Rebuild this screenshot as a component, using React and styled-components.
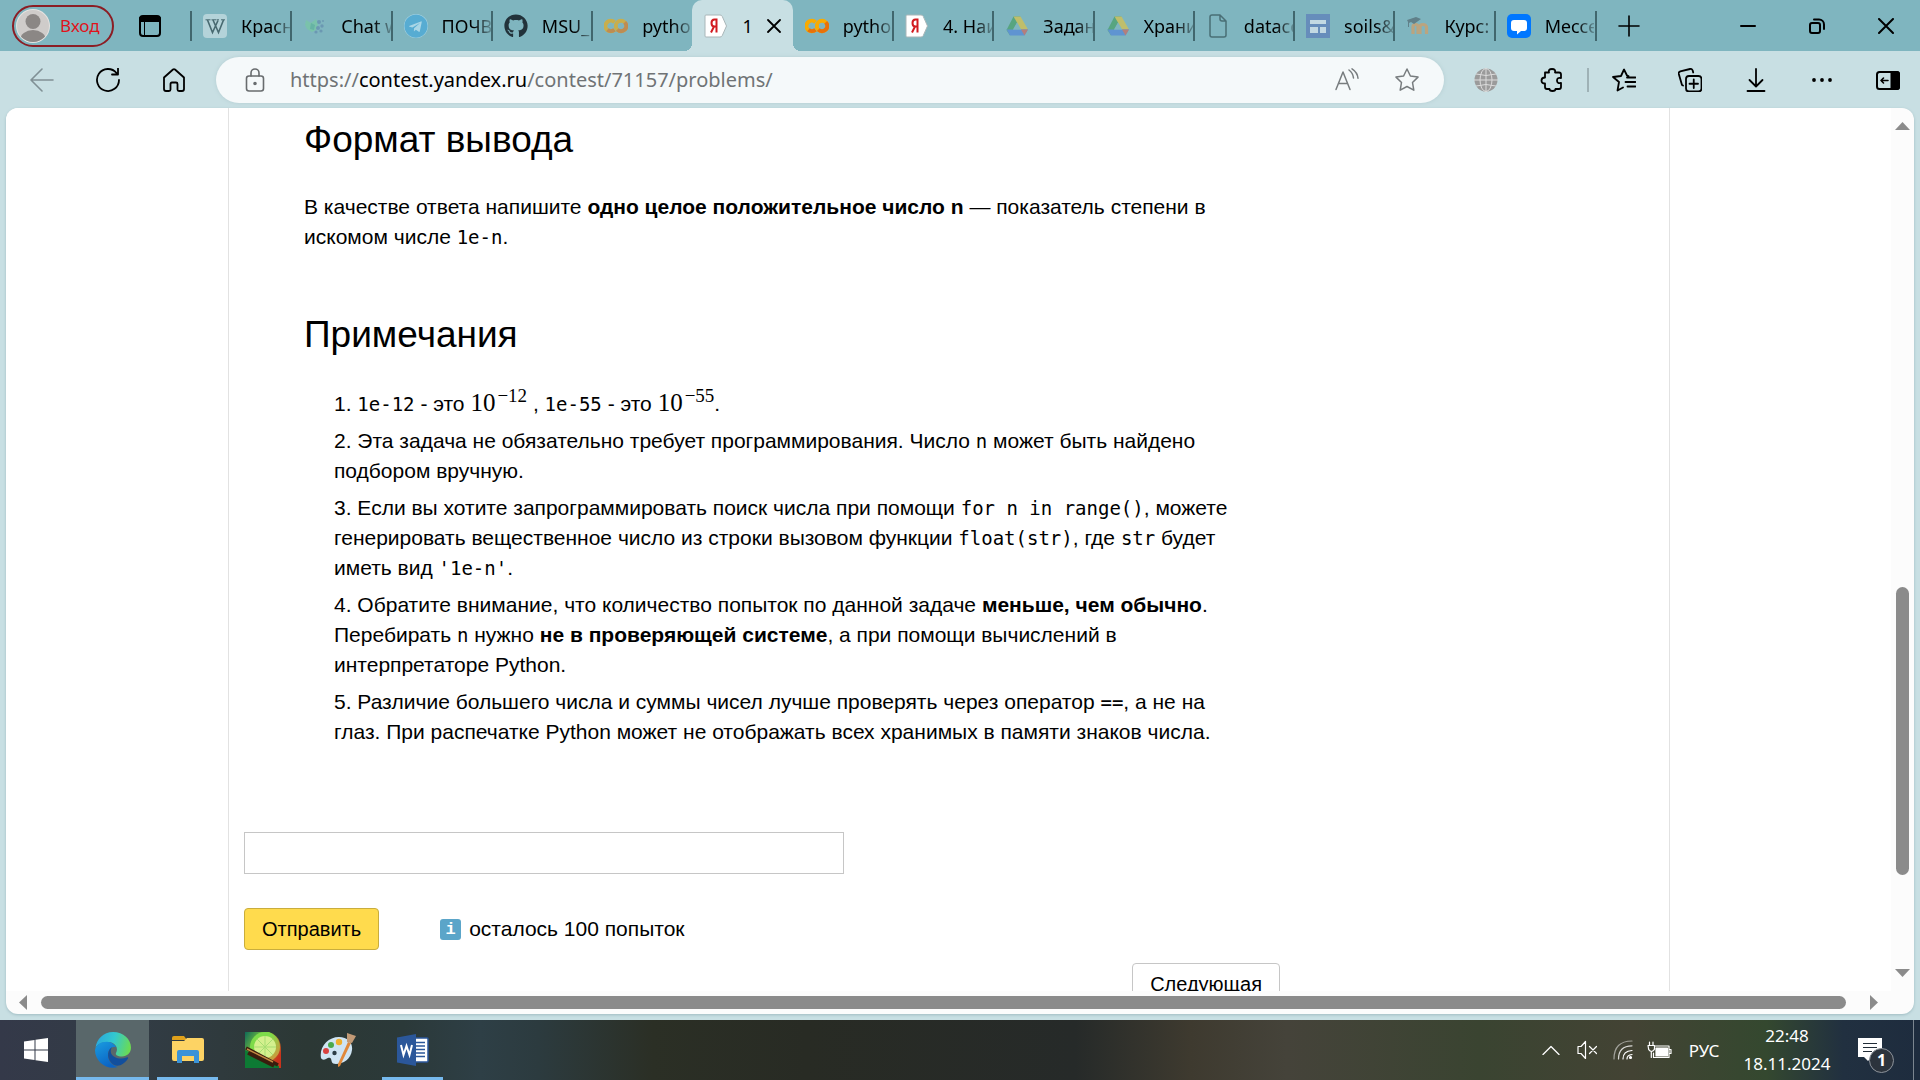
import React from "react";
import styled, { createGlobalStyle, css } from "styled-components";
import { FaGithub, FaTelegram } from "react-icons/fa";

const ui = `"Noto Sans", "Open Sans", sans-serif`;
const sans = `"Liberation Sans", Arial, sans-serif`;

const Global = createGlobalStyle`
  * { box-sizing: border-box; }
  body { margin: 0; background: #c8dfe3; }
  button, input { font: inherit; color: inherit; }
`;

const Desktop = styled.div`
  display: flex;
  flex-direction: column;
  height: 100vh;
  overflow: hidden;
  font-family: ${ui};
  color: #000;
`;

/* ---------- browser chrome ---------- */

const PlainButton = styled.button`
  display: flex;
  align-items: center;
  justify-content: center;
  flex: none;
  padding: 0;
  border: 0;
  background: none;
`;

const TabStrip = styled.header`
  display: flex;
  align-items: stretch;
  height: 51px;
  flex: none;
  background: #7fb5bf;
`;

const StripStart = styled.div`
  display: flex;
  align-items: center;
  flex: none;
  width: 191px;
  padding-left: 12px;
`;

const ProfileButton = styled(PlainButton)`
  justify-content: flex-start;
  gap: 10px;
  width: 102px;
  height: 42px;
  padding-left: 2px;
  border: 2px solid #8b1d24;
  border-radius: 21px;
  color: #e0131b;
  font-size: 17px;
`;

const WorkspaceButton = styled(PlainButton)`
  width: 72px;
  height: 42px;
`;

const Tabs = styled.nav`
  display: flex;
  flex: 1;
  min-width: 0;
`;

const TabButton = styled.button`
  position: relative;
  display: flex;
  align-items: center;
  gap: 14px;
  flex: 1 1 0;
  min-width: 0;
  padding: 0 1px 0 12px;
  border: 0;
  background: none;
  font-size: 18px;
  text-align: left;

  &::before {
    content: "";
    position: absolute;
    left: -1px;
    top: 11px;
    width: 2px;
    height: 30px;
    background: ${(p) => (p.$noDivider ? "transparent" : "#41676e")};
  }

  ${(p) =>
    p.$active &&
    css`
      background: #c8dfe3;
      border-radius: 10px 10px 0 0;
      &::after {
        content: "";
        position: absolute;
        left: -8px;
        right: -8px;
        bottom: 0;
        height: 8px;
        background:
          radial-gradient(circle at 0 0, transparent 8px, #c8dfe3 8px) left / 8px 8px no-repeat,
          radial-gradient(circle at 8px 0, transparent 8px, #c8dfe3 8px) right / 8px 8px no-repeat;
      }
    `}
`;

const TabTitle = styled.span`
  flex: ${(p) => (p.$fade ? "1" : "none")};
  min-width: 0;
  overflow: hidden;
  white-space: nowrap;
  ${(p) => p.$fade && css`mask-image: linear-gradient(90deg, #000 65%, transparent 110%);`}
`;

const TabEnd = styled.i`
  width: 2px;
  height: 30px;
  margin-top: 11px;
  background: #41676e;
`;

const StripEnd = styled.div`
  display: flex;
  align-items: stretch;
  flex: none;
`;

const NewTabButton = styled(PlainButton)`
  width: 64px;
  margin-right: 52px;
`;

const WindowButton = styled(PlainButton)`
  width: 69px;
`;

const ToolBar = styled.div`
  display: flex;
  align-items: center;
  flex: none;
  height: 57px;
  padding-left: 9px;
  background: #c8dfe3;
`;

const ToolButton = styled(PlainButton)`
  width: ${(p) => (p.$last ? "65px" : "66px")};
  height: 44px;
`;

const AddressBar = styled.div`
  display: flex;
  align-items: center;
  flex: 1;
  min-width: 0;
  height: 46px;
  margin: 0 9px;
  padding: 0 7px 0 24px;
  border-radius: 23px;
  background: #f5f9fa;
  box-shadow: 0 0 4px #b3cdd2;
`;

const Url = styled.div`
  flex: 1;
  min-width: 0;
  margin-left: 20px;
  overflow: hidden;
  white-space: nowrap;
  font-size: 20px;
  line-height: 30px;
  color: #6f7375;
  outline: none;

  span { color: #000; }
`;

const AddressButton = styled(PlainButton)`
  width: 60px;
  height: 44px;
`;

const ToolDivider = styled.i`
  width: 2px;
  height: 24px;
  margin: 0 2px;
  background: #9fb2b6;
`;

/* ---------- page ---------- */

const Viewport = styled.div`
  display: grid;
  grid-template-columns: minmax(0, 1fr) 23px;
  grid-template-rows: minmax(0, 1fr) 23px;
  flex: 1;
  min-height: 0;
  margin: 0 6px 6px;
  overflow: hidden;
  border-radius: 12px;
  background: #fcfcfc;
  box-shadow: 0 1px 3px #9fbcc2;
`;

const Scroller = styled.main`
  overflow: hidden;
  padding: 0 221px 0 222px;
  background: #fff;
  font-family: ${sans};
  font-size: 21px;
  line-height: 30px;
`;

const Sheet = styled.div`
  min-height: 100%;
  padding: 10px 15px 0;
  border: solid #e2e2e2;
  border-width: 0 1px;
`;

const Statement = styled.article`
  max-width: 1000px;
  padding-left: 60px;
`;

const Heading = styled.h2`
  margin: 0 0 30px;
  font-size: 37px;
  font-weight: 400;
  line-height: 44px;
`;

const Paragraph = styled.p`
  margin: 0 0 61px;
`;

const Notes = styled.ol`
  margin: 32px 0 0;
  padding: 0 0 0 30px;
  list-style-position: inside;
`;

const Note = styled.li`
  margin-bottom: 7px;
`;

const Code = styled.code`
  font-family: "DejaVu Sans Mono", monospace;
  font-size: 19px;
  line-height: 20px;
`;

const Power = styled.span`
  font-family: "Liberation Serif", serif;
  font-size: 25px;
  line-height: 24px;

  sup {
    margin-left: 2px;
    font-size: 19px;
    line-height: 0;
    vertical-align: 9px;
  }
`;

const AnswerForm = styled.form`
  display: flex;
  flex-direction: column;
  align-items: flex-start;
  margin-top: 85px;
`;

const AnswerInput = styled.input`
  width: 100%;
  max-width: 600px;
  height: 42px;
  padding: 0 10px;
  border: 1px solid #c6c6c6;
  background: #fff;
`;

const SubmitRow = styled.div`
  display: flex;
  align-items: center;
  gap: 61px;
  margin-top: 34px;
`;

const FormButton = styled.button`
  height: 42px;
  padding: 0 17px;
  border: 1px solid ${(p) => (p.$primary ? "#c9ad3d" : "#c6c6c6")};
  border-radius: 4px;
  background: ${(p) => (p.$primary ? "#ffdb4d" : "#fff")};
  font-size: 20px;
`;

const Attempts = styled.span`
  display: flex;
  align-items: center;
  gap: 8px;
`;

const InfoMark = styled.span`
  width: 21px;
  height: 21px;
  border-radius: 3px;
  background: #5ba5c9;
  color: #fff;
  font: 700 17px/21px "Liberation Mono", monospace;
  text-align: center;
`;

const Pager = styled.div`
  display: flex;
  justify-content: flex-end;
  max-width: 1036px;
  margin-top: 13px;
`;

const VerticalBar = styled.div`
  display: flex;
  flex-direction: column;
  align-items: center;
  padding: 14px 0;
`;

const HorizontalBar = styled.div`
  display: flex;
  align-items: center;
  grid-column: 1 / -1;
  gap: 14px;
  padding: 0 36px 0 13px;
`;

const Track = styled.div`
  display: flex;
  flex: 1;
  flex-direction: ${(p) => (p.$vertical ? "column" : "row")};
`;

const Thumb = styled.div`
  width: ${(p) => (p.$vertical ? "13px" : "auto")};
  height: ${(p) => (p.$vertical ? "auto" : "13px")};
  flex: ${(p) => p.$size} 0 0;
  border-radius: 7px;
  background: #8b8b8b;
`;

const TrackGap = styled.div`
  flex: ${(p) => p.$size} 0 0;
`;

/* ---------- taskbar ---------- */

const TaskBar = styled.footer`
  display: flex;
  align-items: stretch;
  flex: none;
  height: 60px;
  background: linear-gradient(
    90deg,
    #343949 0%, #323c45 7%, #2c3835 16%, #2b3939 21%, #2e3f46 25%, #2c3b3f 28%,
    #2b2f25 34%, #282b24 42%, #262a29 56%, #3e3a2f 62%, #45433a 67%, #3a4431 77%,
    #434334 85%, #34482f 92%, #213040 96%, #1e2c3e 100%
  );
  color: #fff;
`;

const StartButton = styled(PlainButton)`
  width: 72px;
  margin-right: 4px;
`;

const TaskButton = styled(PlainButton)`
  width: 73px;
  margin-right: 2px;
  background: ${(p) => (p.$current ? "#59676a" : "none")};
  box-shadow: ${(p) => (p.$current ? "inset 0 -3px #76b9ed" : "none")};
  ${(p) =>
    p.$open &&
    css`background: linear-gradient(#76b9ed, #76b9ed) bottom / 61px 3px no-repeat;`}
`;

const Tray = styled.div`
  display: flex;
  align-items: center;
  margin-left: auto;
`;

const TrayButton = styled(PlainButton)`
  width: 36px;
  height: 60px;
`;

const Language = styled(PlainButton)`
  width: 54px;
  font-size: 17px;
`;

const Clock = styled.time`
  width: 112px;
  margin-right: 14px;
  font-size: 17px;
  line-height: 28px;
  text-align: center;
`;

const Notifications = styled(PlainButton)`
  position: relative;
  width: 26px;
  height: 60px;
  margin-right: 30px;
`;

const NoticeCount = styled.span`
  position: absolute;
  left: 12px;
  top: 28px;
  width: 25px;
  height: 25px;
  border: 1px solid #8d939b;
  border-radius: 50%;
  background: #2c333c;
  font-size: 16px;
  font-weight: 700;
  line-height: 23px;
`;

const ShowDesktop = styled(PlainButton)`
  width: 7px;
  height: 60px;
  border-left: 1px solid #7b858f;
`;

/* ---------- drawings ---------- */

const Svg = styled.svg`
  flex: none;
`;

const Line = ({ w = 24, h = w, box = "0 0 24 24", c = "#000", s = 1.6, children }) => (
  <Svg width={w} height={h} viewBox={box} fill="none" stroke={c} strokeWidth={s} strokeLinecap="round" strokeLinejoin="round" aria-hidden="true">
    {children}
  </Svg>
);

const Fill = ({ w = 24, h = w, box = "0 0 24 24", o = 1, children }) => (
  <Svg width={w} height={h} viewBox={box} opacity={o} aria-hidden="true">{children}</Svg>
);

const Telegram = styled(FaTelegram)`
  flex: none;
  border-radius: 50%;
  background: #a9d6e6;
  color: #57acd2;
`;

const Github = styled(FaGithub)`
  flex: none;
  color: #22323a;
`;

const Avatar = () => (
  <Fill w={34} box="0 0 34 34">
    <clipPath id="av"><circle cx="17" cy="17" r="16" /></clipPath>
    <circle cx="17" cy="17" r="17" fill="#e6e3e1" />
    <g clipPath="url(#av)">
      <rect width="34" height="34" fill="#cfccca" />
      <circle cx="17" cy="12.5" r="7.5" fill="#8b8785" />
      <ellipse cx="17" cy="31" rx="13" ry="10" fill="#8b8785" />
    </g>
  </Fill>
);

const Wiki = () => (
  <Fill>
    <rect width="24" height="24" rx="4" fill="#b4d3d9" />
    <g stroke="#476970" fill="none">
      <path d="M4.5 6l5 12.5L15 6.5M10 6l5.5 12.5L20.5 6" strokeWidth="1.6" />
      <path d="M2.5 5.8h5M8.5 5.8h4.5M13.5 5.8h2.5M18 5.8h4" strokeWidth="1" />
    </g>
  </Fill>
);
const ChatIcon = () => (
  <Fill o={0.75}>
    <path d="M3 6l5 3 5-4 2 5-2 6-4 2-5-3-2-4z" fill="#79c7a5" />
    <path d="M8 9l4 2-1 5-4-1z" fill="#5eb39b" />
    <g fill="#658fae"><circle cx="16" cy="8" r="2" /><circle cx="19" cy="12" r="1.7" /><circle cx="15" cy="14" r="2" /><circle cx="18" cy="17" r="1.6" /><circle cx="13" cy="18" r="1.6" /><circle cx="20" cy="7" r="1" /></g>
  </Fill>
);
const Colab = ({ dim }) => (
  <Fill o={dim ? 0.6 : 1}>
    <g fill="none" strokeWidth="4">
      <path d="M10.5 8.200A5.300 5.300 0 1 0 10.500 15.800" stroke="#f9ab00" />
      <path d="M3.500 15.800A5.300 5.300 0 0 0 10.500 15.800" stroke="#e8710a" />
      <circle cx="17" cy="12" r="5.200" stroke="#f9ab00" />
      <path d="M20.700 8.300A5.200 5.200 0 0 1 13.300 15.700" stroke="#e8710a" />
    </g>
  </Fill>
);
const Ya = () => (
  <Fill>
    <path d="M2 1h14q1.500 0 2.200 1.300L22.500 12l-4.300 9.700Q17.500 23 16 23H2Q1 23 1 22V2Q1 1 2 1z" fill="#fff" stroke="#a9b6b8" />
    <path d="M12.500 18.500V5.500h-2q-3 0-3 3.500t3 3.500h2M10 12.500l-3 6" fill="none" stroke="#d21b20" strokeWidth="2" />
  </Fill>
);
const Drive = () => (
  <Fill o={0.75}>
    <path d="M8.500 2.500h7L12 9 5 21.500 1.500 16z" fill="#4aa06c" />
    <path d="M8.500 2.500h7L23 15.500h-7z" fill="#d5c24f" />
    <path d="M1.500 15.500H23L19.500 21.500H5z" fill="#5589d8" />
    <path d="M16 15.500h7l-3.500 6z" fill="#c56d66" />
    <path d="M12 8.500l4 7H8z" fill="#7fb5bf" />
  </Fill>
);
const Doc = () => (
  <Line c="#4a6f76" s={1.5}><path d="M6 1h8l6 6v14a2 2 0 0 1-2 2H6a2 2 0 0 1-2-2V3a2 2 0 0 1 2-2zM14 1v4a2 2 0 0 0 2 2h4" /></Line>
);
const Sites = () => (
  <Fill><rect width="24" height="24" fill="#668dbb" /><path d="M4 6h16v4H4zM4 13h8v6H4zM14 13h6v6h-6z" fill="#c2d9e3" /></Fill>
);
const Moodle = () => (
  <Fill o={0.8}>
    <path d="M7 20v-7q0-2.500 2.500-2.500T12 13v7M14 20v-7q0-2.500 3-2.500t3.500 2.500v7" fill="none" stroke="#c9a070" strokeWidth="3.200" />
    <path d="M1 6l9-3 5 2-7 5-3-2-2 1v4H2V8z" fill="#59747c" />
  </Fill>
);
const Messenger = () => (
  <Fill><rect width="24" height="24" rx="5" fill="#0077ff" /><path d="M7 6h10q3 0 3 3v5q0 3-3 3h-3l-4 3.500V17H7q-3 0-3-3V9q0-3 3-3z" fill="#fff" /></Fill>
);
const Globe = () => (
  <Fill>
    <circle cx="12" cy="12" r="11.500" fill="#9b9b9b" />
    <g fill="none" stroke="#dcdcdc" strokeWidth="1"><path d="M12 0v24M0 12h24M2 6q10 3 20 0M2 18q10-3 20 0" /><ellipse cx="12" cy="12" rx="6" ry="11.500" /></g>
  </Fill>
);

const Windows = () => (
  <Fill><path d="M0 3.400L10.500 2v9.500H0zM11.500 1.800L24 0v11.500H11.500zM0 12.500h10.500V22L0 20.600zM11.500 12.500H24V24l-12.500-1.800z" fill="#fff" /></Fill>
);
const Edge = () => (
  <Fill w={36} box="0 0 36 36">
    <defs>
      <linearGradient id="e1" x1="0" y1="0.300" x2="1" y2="0.500"><stop offset="0" stopColor="#2aa7dd" /><stop offset=".5" stopColor="#33c8cf" /><stop offset="1" stopColor="#6bdb52" /></linearGradient>
      <linearGradient id="e2" x1="0" y1="0" x2="0.500" y2="1"><stop offset="0" stopColor="#1a9de0" /><stop offset="1" stopColor="#0b63c4" /></linearGradient>
    </defs>
    <path d="M0.500 16C1.500 7 8.500 0 18 0c10.500 0 18 7.500 18 15.500 0 5.500-4 9-9 9-4.500 0-7-1.800-6-3.500 3-5-1-11-8-11C7 10 2.500 12 0.500 16z" fill="url(#e1)" />
    <path d="M0 18C1 13 6 9.500 12 9.800c4.500.2 8 2.700 9 5.700-3-1.500-8 1-8 7.500 0 6 4.500 11 10 12C12 38.500 0 30 0 18z" fill="url(#e2)" />
    <path d="M17 15c-6 4-5 14 2 18 5 2.500 11-1.500 14-6.500.500-1-.5-1.500-1.500-1-5.500 2.500-14 .5-15.500-4.500-.600-2.500 0-4.500 1-6z" fill="#124f9d" />
  </Fill>
);
const Explorer = () => (
  <Fill w={32} h={28} box="0 0 32 28">
    <path d="M0 2q0-2 2-2h10l3 4H0z" fill="#e0a11b" />
    <path d="M0 5h12l3-3h15q2 0 2 2v19q0 2-2 2H2q-2 0-2-2z" fill="#fdd364" />
    <path d="M5 27V16q0-2 2-2h18q2 0 2 2v11h-5v-7H10v7z" fill="#3b93d8" />
  </Fill>
);
const Sai = () => (
  <Fill w={36} box="0 0 36 36">
    <defs>
      <clipPath id="sc"><path d="M0 0h24q12 4 12 18v18H0z" /></clipPath>
      <linearGradient id="sg" x1="0" y1="0" x2="1" y2="0.600"><stop offset="0" stopColor="#0f6a58" /><stop offset=".5" stopColor="#8fd336" /><stop offset="1" stopColor="#c9331c" /></linearGradient>
      <linearGradient id="sl" x1="0" y1="0" x2="1" y2="1"><stop offset=".4" stopColor="#7ddb4a" /><stop offset="1" stopColor="#e6863a" /></linearGradient>
    </defs>
    <g clipPath="url(#sc)">
      <rect width="36" height="36" fill="url(#sg)" />
      <circle cx="20" cy="15" r="15" fill="url(#sl)" /><circle cx="20" cy="15" r="11" fill="#d4f08e" />
      <path d="M20 4v22M9 15h22M12 7l16 16M28 7L12 23" stroke="#a6dd72" strokeWidth="1" />
      <path d="M0 18l34 16v2H0z" fill="#0d7a34" />
      <path d="M1 16l32 17M3 21l26 13" stroke="#3a1d0e" strokeWidth="3.500" /><path d="M2 17l26 13" stroke="#c48a43" strokeWidth="1.500" />
    </g>
  </Fill>
);
const Paint = () => (
  <Fill w={36} box="0 0 36 36">
    <path d="M1 26C-1 15 8 5 19 5c9 0 14 6 13 13-1 9-9 14-16 14-5 0-4-3-5-5s-3-1-5 0-4 1-5-1z" fill="#cfe4f3" />
    <circle cx="6" cy="19" r="3" fill="#d8413f" /><circle cx="11" cy="13" r="3" fill="#4aa94c" /><circle cx="19" cy="10" r="3.200" fill="#f0b02e" /><circle cx="14.500" cy="21" r="2.200" fill="#2b3c45" />
    <path d="M28 10l3 1-11 23-2 1 0-3z" fill="#e0883a" /><path d="M27 1l9 3-4 7-5-1z" fill="#c29a76" />
  </Fill>
);
const Word = () => (
  <Fill w={32} box="0 0 32 32">
    <rect x="15" y="4" width="16" height="24" rx="1" fill="#fff" stroke="#2b579a" strokeWidth="1.500" />
    <path d="M19 8.500h9M19 12h9M19 15.500h9M19 19h9M19 22.500h9" stroke="#2b579a" strokeWidth="1.500" />
    <path d="M0 3.500L19 0v32L0 28.500z" fill="#2b579a" />
    <path d="M4 11l2.500 10L9.500 12l3 9L15 11" fill="none" stroke="#fff" strokeWidth="2" />
  </Fill>
);

const tabs = [
  { title: "Красная", icon: <Wiki /> },
  { title: "Chat w", icon: <ChatIcon /> },
  { title: "ПОЧВЫ", icon: <Telegram size={24} /> },
  { title: "MSU_M", icon: <Github size={24} /> },
  { title: "python", icon: <Colab dim /> },
  { title: "1", icon: <Ya />, active: true },
  { title: "python", icon: <Colab />, noDivider: true },
  { title: "4. Наи", icon: <Ya /> },
  { title: "Задани", icon: <Drive /> },
  { title: "Храни", icon: <Drive /> },
  { title: "datace", icon: <Doc /> },
  { title: "soils&s", icon: <Sites /> },
  { title: "Курс: М", icon: <Moodle /> },
  { title: "Мессе", icon: <Messenger /> },
];

const Browser = () => (
  <>
    <TabStrip>
      <StripStart>
        <ProfileButton><Avatar />Вход</ProfileButton>
        <WorkspaceButton aria-label="Рабочие области">
          <Line w={22} box="0 0 22 22" s={2}><rect x="1" y="1" width="20" height="20" rx="3" /><path d="M1 3h20v3H1z" fill="#000" /><path d="M5.500 6v15" strokeWidth="1" /></Line>
        </WorkspaceButton>
      </StripStart>
      <Tabs>
        {tabs.map((t, i) => (
          <TabButton key={i} $active={t.active} $noDivider={t.active || t.noDivider}>
            {t.icon}
            <TabTitle $fade={!t.active}>{t.title}</TabTitle>
            {t.active && (
              <Line w={14} box="0 0 14 14" s={1.8}><path d="M1 1l12 12M13 1L1 13" /></Line>
            )}
          </TabButton>
        ))}
        <TabEnd />
      </Tabs>
      <StripEnd>
        <NewTabButton aria-label="Новая вкладка"><Line w={22} box="0 0 22 22"><path d="M11 1v20M1 11h20" /></Line></NewTabButton>
        <WindowButton aria-label="Свернуть"><Line w={16} box="0 0 16 16" s={2}><path d="M1 8h14" /></Line></WindowButton>
        <WindowButton aria-label="Восстановить"><Line w={16} box="0 0 16 16" s={2}><rect x="1" y="5" width="10" height="10" rx="2" /><path d="M5 1.500h5a5 5 0 0 1 5 5V11" /></Line></WindowButton>
        <WindowButton aria-label="Закрыть"><Line w={16} box="0 0 16 16" s={2}><path d="M1 1l14 14M15 1L1 15" /></Line></WindowButton>
      </StripEnd>
    </TabStrip>
    <ToolBar>
      <ToolButton aria-label="Назад"><Line c="#809095"><path d="M23 12H1M12 1L1 12l11 11" /></Line></ToolButton>
      <ToolButton aria-label="Обновить"><Line s={1.8}><path d="M23 12A11 11 0 1 1 20.500 5M22 .5V6.500H16" /></Line></ToolButton>
      <ToolButton aria-label="Домой"><Line s={1.8}><path d="M2 9.500L11 1.500q1-.8 2 0L22 9.500V21q0 2-2 2h-3q-1.500 0-1.500-1.500V16q0-1.500-1.500-1.500h-4q-1.500 0-1.500 1.500v5.500Q8.500 23 7 23H4q-2 0-2-2z" /></Line></ToolButton>
      <AddressBar>
        <PlainButton aria-label="Сведения о сайте">
          <Line w={30} h={24} box="-3 0 30 24" c="#686c6e"><rect x="3.500" y="8" width="17" height="15" rx="2.500" /><path d="M8 8V5a4 4 0 0 1 8 0v3" /><circle cx="12" cy="15.500" r="1" fill="#686c6e" /></Line>
        </PlainButton>
        <Url role="textbox" aria-label="Адрес" contentEditable suppressContentEditableWarning spellCheck={false}>
          https://<span>contest.yandex.ru</span>/contest/71157/problems/
        </Url>
        <AddressButton aria-label="Прочитать вслух"><Line c="#777c7e" s={1.5}><path d="M1 21.500L8 4l7 17.500M3.500 15.500h9M14 2q4 3 4.500 8M17 .8q5.500 3.500 6 9.500" /></Line></AddressButton>
        <AddressButton aria-label="В избранное"><Line c="#777c7e" s={1.5}><path d="M12 1l3.400 7 7.600 1.100-5.500 5.400 1.300 7.700L12 18.500l-6.800 3.700 1.300-7.700L1 9.100 8.600 8z" /></Line></AddressButton>
      </AddressBar>
      <ToolButton aria-label="Сайт"><Globe /></ToolButton>
      <ToolButton aria-label="Расширения"><Line s={1.8}><path d="M5 4.500h4q-1-3.500 3-3.500t3 3.500h4q2 0 2 2V10q-4-.8-4 2.500t4 2.500v4q0 2-2 2h-3.500q0 2-3 2t-3-2H7q-2 0-2-2V15.500q-3.500 0-3.500-3t3.500-3z" /></Line></ToolButton>
      <ToolDivider />
      <ToolButton aria-label="Избранное"><Line s={1.8}><path d="M16.500 8L15 7.500 12 1.500 9 8l-8 1 6 5-1.500 8.500L11 19.500M15 9.500h8.500M13.500 14h10M15.500 18.500h8" /></Line></ToolButton>
      <ToolButton aria-label="Коллекции"><Line s={1.8}><rect x="8" y="8" width="15.500" height="15.500" rx="3" /><path d="M15.750 11.500v8.500M11.500 15.750h8.500M5 17.500L4 17 .800 6q-.5-2 1.500-2.700L12 1q2-.5 2.700 1.500L15.200 4.500" /></Line></ToolButton>
      <ToolButton aria-label="Загрузки"><Line s={1.8}><path d="M12 1v17M5.500 12l6.500 6.500L18.500 12M3.500 23h17" /></Line></ToolButton>
      <ToolButton aria-label="Меню"><Fill><circle cx="4" cy="12" r="1.900" /><circle cx="12" cy="12" r="1.900" /><circle cx="20" cy="12" r="1.900" /></Fill></ToolButton>
      <ToolButton $last aria-label="Боковая панель"><Line s={2}><rect x="1" y="4" width="22" height="17" rx="2.500" /><path d="M15.500 4H21q2 0 2 2v13q0 2-2 2h-5.500z" fill="#000" /><path d="M12 12.500H5M7.500 10L5 12.500 7.500 15" strokeWidth="1.600" /></Line></ToolButton>
    </ToolBar>
  </>
);

const Arrow = ({ d, w, h }) => (
  <Svg width={w} height={h} viewBox={`0 0 ${w} ${h}`} aria-hidden="true"><path d={d} fill="#8b8b8b" /></Svg>
);

const Page = () => (
  <Viewport>
    <Scroller>
      <Sheet>
        <Statement>
          <Heading>Формат вывода</Heading>
          <Paragraph>
            В качестве ответа напишите <b>одно целое положительное число n</b> — показатель степени в искомом числе <Code>1e-n</Code>.
          </Paragraph>
          <Heading>Примечания</Heading>
          <Notes>
            <Note><Code>1e-12</Code> - это <Power>10<sup>−12</sup></Power> , <Code>1e-55</Code> - это <Power>10<sup>−55</sup></Power>.</Note>
            <Note>Эта задача не обязательно требует программирования. Число <Code>n</Code> может быть найдено подбором вручную.</Note>
            <Note>Если вы хотите запрограммировать поиск числа при помощи <Code>for n in range()</Code>, можете генерировать вещественное число из строки вызовом функции <Code>float(str)</Code>, где <Code>str</Code> будет иметь вид <Code>'1e-n'</Code>.</Note>
            <Note>Обратите внимание, что количество попыток по данной задаче <b>меньше, чем обычно</b>. Перебирать <Code>n</Code> нужно <b>не в проверяющей системе</b>, а при помощи вычислений в интерпретаторе Python.</Note>
            <Note>Различие большего числа и суммы чисел лучше проверять через оператор <Code>==</Code>, а не на глаз. При распечатке Python может не отображать всех хранимых в памяти знаков числа.</Note>
          </Notes>
        </Statement>
        <AnswerForm onSubmit={(e) => e.preventDefault()}>
          <AnswerInput type="text" aria-label="Ответ" />
          <SubmitRow>
            <FormButton $primary type="submit">Отправить</FormButton>
            <Attempts><InfoMark>i</InfoMark>осталось 100 попыток</Attempts>
          </SubmitRow>
        </AnswerForm>
        <Pager><FormButton type="button">Следующая</FormButton></Pager>
      </Sheet>
    </Scroller>
    <VerticalBar>
      <Arrow w={15} h={8} d="M0 8L7.500 0 15 8z" />
      <Track $vertical><TrackGap $size={457} /><Thumb $vertical $size={288} /><TrackGap $size={94} /></Track>
      <Arrow w={15} h={8} d="M0 0h15L7.500 8z" />
    </VerticalBar>
    <HorizontalBar>
      <Arrow w={8} h={15} d="M8 0v15L0 7.500z" />
      <Track><Thumb $size={1805} /><TrackGap $size={10} /></Track>
      <Arrow w={8} h={15} d="M0 0v15l8-7.500z" />
    </HorizontalBar>
  </Viewport>
);

const Bottom = () => (
  <TaskBar>
    <StartButton aria-label="Пуск"><Windows /></StartButton>
    <TaskButton $current aria-label="Microsoft Edge"><Edge /></TaskButton>
    <TaskButton $open aria-label="Проводник"><Explorer /></TaskButton>
    <TaskButton aria-label="PaintTool SAI"><Sai /></TaskButton>
    <TaskButton aria-label="Paint"><Paint /></TaskButton>
    <TaskButton $open aria-label="Word"><Word /></TaskButton>
    <Tray>
      <TrayButton aria-label="Скрытые значки"><Line w={18} h={10} box="0 0 18 10" c="#fff" s={1.3}><path d="M1 9.500l8-8 8 8" /></Line></TrayButton>
      <TrayButton aria-label="Звук выключен"><Line w={20} box="0 0 20 20" c="#fff" s={1.2}><path d="M1 6.500h3L8.500 1.500v17L4 13.500H1zM12.500 6.500l7 7M19.500 6.500l-7 7" /></Line></TrayButton>
      <TrayButton aria-label="Сеть"><Line w={20} box="0 0 20 20" c="#fff" s={1.2}><path d="M1 19Q1 1 19 1" opacity=".5" /><path d="M5.500 19Q5.500 6 19 5.800" opacity=".8" /><path d="M10 19q0-8 9-8.500M14 19q0-4 5-4.500" /><circle cx="17.500" cy="17.500" r="1" fill="#fff" /></Line></TrayButton>
      <TrayButton aria-label="Батарея"><Line w={25} h={18} box="0 0 25 18" c="#fff" s={1.2}><path d="M8 5h14v11.500H6.500V12M22 8.500h2v4h-2" /><path d="M9 7h11.500v8H9z" fill="#fff" /><path d="M2.500 1v3M6 1v3M1 4.500h6.500v3q0 2-3 3-3-1-3-3zM4.300 10.500v6" /></Line></TrayButton>
      <Language>РУС</Language>
      <Clock>22:48<br />18.11.2024</Clock>
      <Notifications aria-label="Центр уведомлений">
        <Fill w={24} box="0 0 24 24"><path d="M0 0h24v19H14l-4 4-4-4H0z" fill="#fff" /><path d="M5 5.500h14M5 9.500h14M5 13.500h9" stroke="#222d38" strokeWidth="1.200" /></Fill>
        <NoticeCount>1</NoticeCount>
      </Notifications>
      <ShowDesktop aria-label="Показать рабочий стол" />
    </Tray>
  </TaskBar>
);

export default function App() {
  return (
    <Desktop>
      <Global />
      <Browser />
      <Page />
      <Bottom />
    </Desktop>
  );
}
